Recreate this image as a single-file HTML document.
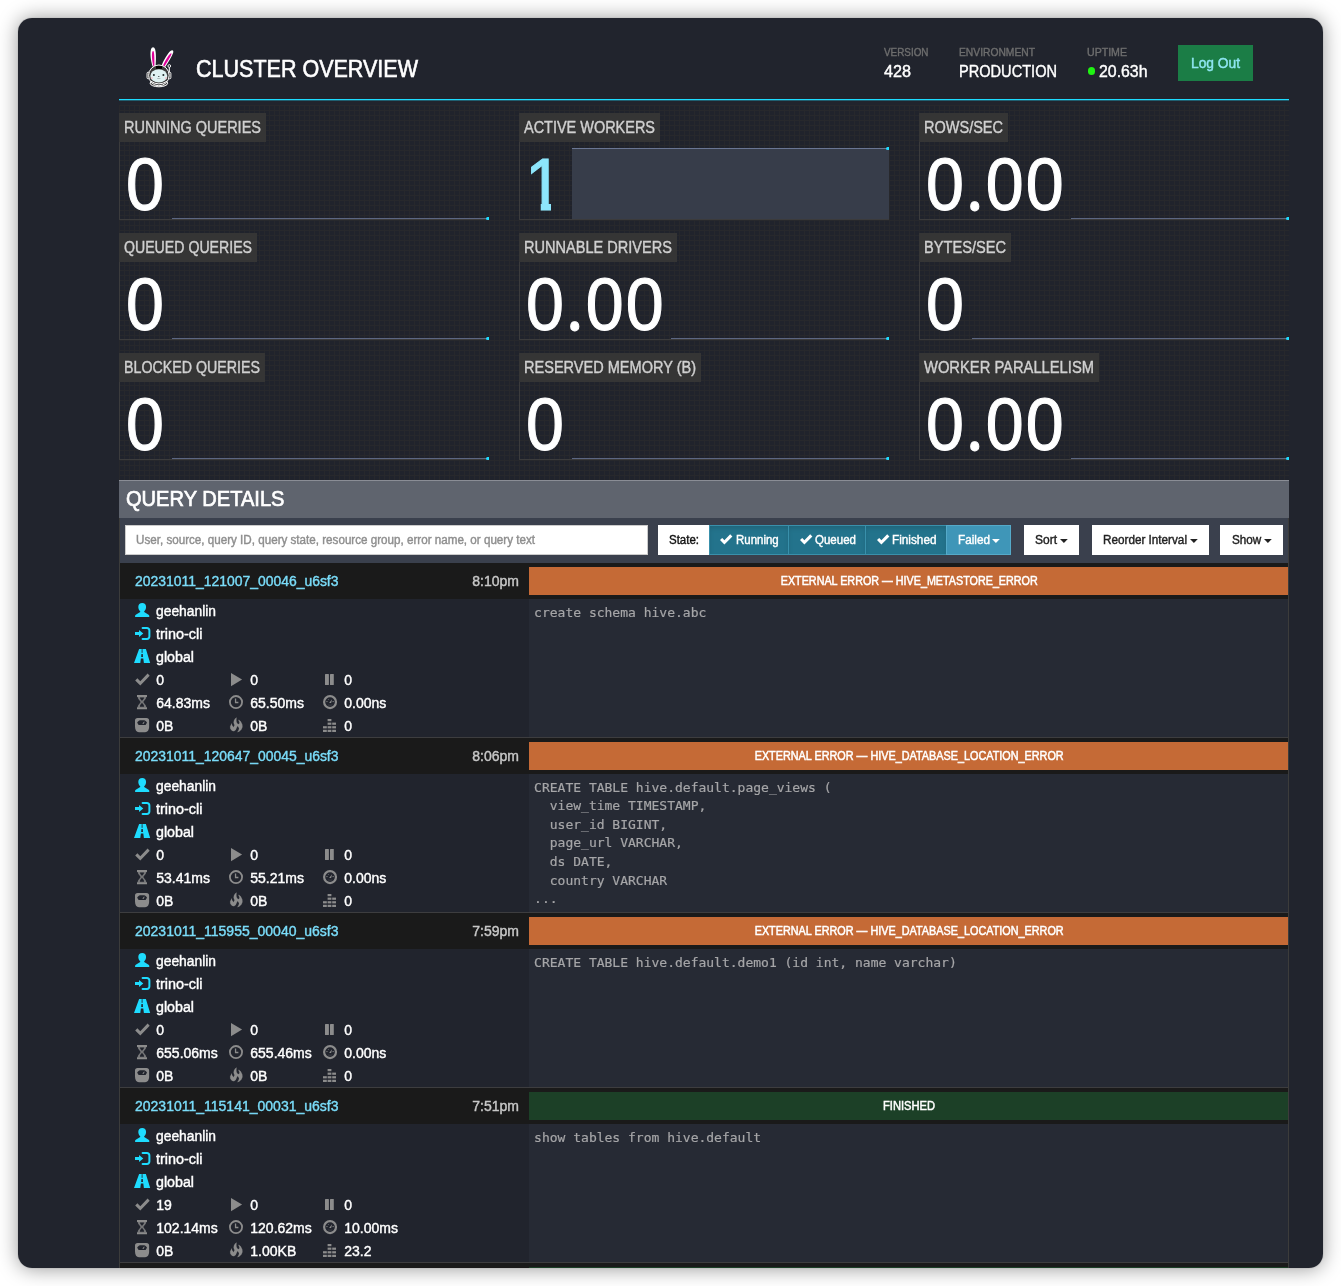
<!DOCTYPE html>
<html lang="en"><head><meta charset="utf-8"><title>Cluster Overview - Trino</title>
<style>
html,body{margin:0;padding:0;background:#fff;}
body{width:1341px;height:1286px;overflow:hidden;position:relative;font-family:"Liberation Sans",Arial,sans-serif;}
.win{position:absolute;left:18px;top:18px;width:1305px;height:1250px;border-radius:14px;background:#21242d;overflow:hidden;}
.shadow{position:absolute;left:18px;top:18px;width:1305px;height:1250px;border-radius:14px;box-shadow:0 .5px 20px rgba(0,0,0,.4),0 0 1px rgba(0,0,0,.4);}
.pg{position:absolute;left:-18px;top:-18px;width:1341px;height:1286px;will-change:transform;}
.t{position:absolute;white-space:pre;line-height:1;-webkit-text-stroke-width:.4px;}
.r{position:absolute;}
svg{position:absolute;overflow:visible;}
.dot{display:inline-block;width:21.4px;line-height:0;font-size:.9em;position:relative;left:-1.2px;top:-.6px;text-align:center;letter-spacing:0;font-family:'Noto Sans CJK SC','Noto Sans CJK JP','Liberation Sans',sans-serif;}
.grid{background-color:#20232c;background-image:linear-gradient(to right,#27282c 1px,transparent 1px),linear-gradient(to bottom,#27282c 1px,transparent 1px);background-size:5px 5px;}
</style></head><body>
<div class="shadow"></div>
<div class="win"><div class="pg">
<svg style="left:140px;top:44px" width="40" height="46" viewBox="0 0 40 46">
<g transform="translate(-140,-44)">
<path d="M152.6 66.6C150.6 60 149.9 53 151 49.3C151.8 46.6 154.3 46.6 155.1 49.3C156.2 53 156.1 60 155.6 66.2Z" fill="#fff"/>
<path d="M153.3 66C152 60.5 151.6 55 152.2 52.3C152.6 50.6 153.6 50.6 153.9 52.3C154.4 55 154.5 60.5 154.4 66Z" fill="#e1009a"/>
<path d="M161.6 65.6C164 59.5 167.6 53.6 170.4 51C172.4 49.2 174 50.4 173.1 52.9C171.8 56.6 168.4 62 165.2 67Z" fill="#fff"/>
<path d="M162.9 65.8C165 60.8 168 56 170.2 53.8C171.2 52.8 171.8 53.3 171.3 54.6C170.2 57.4 167.4 61.8 164.4 66.4Z" fill="#e1009a"/>
<path d="M169.3 72.5V67" stroke="#fff" stroke-width="1.1" fill="none"/>
<circle cx="169.3" cy="66" r="1.35" fill="#21242d" stroke="#fff" stroke-width=".9"/>
<rect x="147" y="72.2" width="2.6" height="6.6" rx="1.2" fill="#3a3a3a" stroke="#fff" stroke-width=".9"/>
<rect x="168.3" y="72.2" width="2.6" height="6.6" rx="1.2" fill="#3a3a3a" stroke="#fff" stroke-width=".9"/>
<ellipse cx="158.9" cy="83.2" rx="8.8" ry="3.6" fill="#4a4a4a" stroke="#fff" stroke-width="1"/>
<ellipse cx="158.9" cy="75.4" rx="10.3" ry="10.4" fill="#3c3c3c" stroke="#fff" stroke-width="1"/>
<ellipse cx="158.8" cy="75.9" rx="8.5" ry="6.6" fill="#dff2f2"/>
<path d="M150.8 81.2Q158.9 86.6 167 81.2" stroke="#fff" stroke-width="1" fill="none"/>
<rect x="156" y="65.9" width="6" height="2.9" fill="#000"/>
<circle cx="153.9" cy="75.1" r="1" fill="#1f2a2a"/>
<circle cx="163.4" cy="75.1" r="1" fill="#1f2a2a"/>
<path d="M157.9 76H159.7L158.8 77.1Z" fill="#111"/>
<path d="M157.2 78.5H160.4" stroke="#7d8a8a" stroke-width=".5"/>
<circle cx="151.8" cy="77.9" r="1" fill="#f4c9cf"/>
<circle cx="165.8" cy="77.9" r="1" fill="#f4c9cf"/>
</g></svg>
<span class="t" id="title" style="left:195.5px;top:58.03px;font-size:23px;color:#fff;transform:scaleX(0.9355);transform-origin:0 0;-webkit-text-stroke-width:.6px;">CLUSTER OVERVIEW</span>
<span class="t" id="h_ver_l" style="left:883.5px;top:46.89px;font-size:11px;color:#6e6e6e;transform:scaleX(0.8987);transform-origin:0 0;">VERSION</span>
<span class="t" id="h_ver" style="left:883.5px;top:64.16px;font-size:16px;color:#fff;transform:scaleX(1.0111);transform-origin:0 0;">428</span>
<span class="t" id="h_env_l" style="left:958.5px;top:46.89px;font-size:11px;color:#6e6e6e;transform:scaleX(0.9350);transform-origin:0 0;">ENVIRONMENT</span>
<span class="t" id="h_env" style="left:958.5px;top:64.16px;font-size:16px;color:#fff;transform:scaleX(0.9111);transform-origin:0 0;">PRODUCTION</span>
<span class="t" id="h_up_l" style="left:1086.9px;top:46.89px;font-size:11px;color:#6e6e6e;transform:scaleX(0.9624);transform-origin:0 0;">UPTIME</span>
<div class="r" style="left:1087.7px;top:67.4px;width:7.4px;height:7.4px;background:#1ff312;border-radius:50%;"></div>
<span class="t" id="h_up" style="left:1099.3px;top:64.16px;font-size:16px;color:#fff;transform:scaleX(0.9911);transform-origin:0 0;">20.63h</span>
<div class="r" style="left:1178px;top:45px;width:75px;height:35.5px;background:#1b7d46;"></div>
<span class="t" id="logout" style="left:1190.8px;top:56.15px;font-size:14px;color:#8fe6f2;transform:scaleX(0.9834);transform-origin:0 0;">Log Out</span>
<div class="r" style="left:119px;top:99px;width:1170px;height:1px;background:#1edcff;"></div>
<div class="r" style="left:119px;top:100px;width:1170px;height:1px;background:rgba(30,220,255,.32);"></div>
<div class="r grid" style="left:119px;top:105px;width:1170px;height:375px;"></div>
<div class="r" style="left:119px;top:113px;width:1px;height:107px;background:#3b3b3c;"></div>
<div class="r" style="left:119px;top:219px;width:370px;height:1px;background:#3b3b3c;"></div>
<div class="r" style="left:119px;top:113px;width:147px;height:28.5px;background:#353535;"></div>
<span class="t" id="s00t" style="left:124.3px;top:120.46px;font-size:16px;color:#d0d0d0;transform:scaleX(0.9065);transform-origin:0 0;">RUNNING QUERIES</span>
<span class="t" id="s00v" style="left:126.1px;top:148.44px;font-size:74.5px;color:#fff;-webkit-text-stroke-width:1.1px;transform:scaleX(.915);transform-origin:0 0;letter-spacing:2.4px;">0</span>
<div class="r" style="left:172px;top:218px;width:317px;height:1px;background:#5c6782;"></div>
<div class="r" style="left:486px;top:216.7px;width:3px;height:3.6px;background:#1edcff;border-radius:1.8px 0 0 1.8px;"></div>
<div class="r" style="left:119px;top:233px;width:1px;height:107px;background:#3b3b3c;"></div>
<div class="r" style="left:119px;top:339px;width:370px;height:1px;background:#3b3b3c;"></div>
<div class="r" style="left:119px;top:233px;width:138px;height:28.5px;background:#353535;"></div>
<span class="t" id="s01t" style="left:124.3px;top:240.46px;font-size:16px;color:#d0d0d0;transform:scaleX(0.8832);transform-origin:0 0;">QUEUED QUERIES</span>
<span class="t" id="s01v" style="left:126.1px;top:268.44px;font-size:74.5px;color:#fff;-webkit-text-stroke-width:1.1px;transform:scaleX(.915);transform-origin:0 0;letter-spacing:2.4px;">0</span>
<div class="r" style="left:172px;top:338px;width:317px;height:1px;background:#5c6782;"></div>
<div class="r" style="left:486px;top:336.7px;width:3px;height:3.6px;background:#1edcff;border-radius:1.8px 0 0 1.8px;"></div>
<div class="r" style="left:119px;top:353px;width:1px;height:107px;background:#3b3b3c;"></div>
<div class="r" style="left:119px;top:459px;width:370px;height:1px;background:#3b3b3c;"></div>
<div class="r" style="left:119px;top:353px;width:146px;height:28.5px;background:#353535;"></div>
<span class="t" id="s02t" style="left:124.3px;top:360.46px;font-size:16px;color:#d0d0d0;transform:scaleX(0.8893);transform-origin:0 0;">BLOCKED QUERIES</span>
<span class="t" id="s02v" style="left:126.1px;top:388.44px;font-size:74.5px;color:#fff;-webkit-text-stroke-width:1.1px;transform:scaleX(.915);transform-origin:0 0;letter-spacing:2.4px;">0</span>
<div class="r" style="left:172px;top:458px;width:317px;height:1px;background:#5c6782;"></div>
<div class="r" style="left:486px;top:456.7px;width:3px;height:3.6px;background:#1edcff;border-radius:1.8px 0 0 1.8px;"></div>
<div class="r" style="left:519px;top:113px;width:1px;height:107px;background:#3b3b3c;"></div>
<div class="r" style="left:519px;top:219px;width:370px;height:1px;background:#3b3b3c;"></div>
<div class="r" style="left:519px;top:113px;width:141px;height:28.5px;background:#353535;"></div>
<span class="t" id="s10t" style="left:524.3px;top:120.46px;font-size:16px;color:#d0d0d0;transform:scaleX(0.9040);transform-origin:0 0;">ACTIVE WORKERS</span>
<span class="t" id="s10v" style="left:524.8px;top:148.44px;font-size:74.5px;color:#8de6fc;-webkit-text-stroke-width:1.1px;transform:scaleX(.915);transform-origin:0 0;letter-spacing:2.4px;clip-path:polygon(0 -5px,100% -5px,100% 55px,28.4px 55px,28.4px 100%,17.2px 100%,17.2px 55px,0 55px);">1</span>
<div class="r" style="left:572px;top:149px;width:317px;height:70px;background:#373d4a;"></div>
<div class="r" style="left:572px;top:148px;width:317px;height:1px;background:#6a7693;"></div>
<div class="r" style="left:886px;top:146.7px;width:3px;height:3.6px;background:#1edcff;border-radius:1.8px 0 0 1.8px;"></div>
<div class="r" style="left:519px;top:233px;width:1px;height:107px;background:#3b3b3c;"></div>
<div class="r" style="left:519px;top:339px;width:370px;height:1px;background:#3b3b3c;"></div>
<div class="r" style="left:519px;top:233px;width:158px;height:28.5px;background:#353535;"></div>
<span class="t" id="s11t" style="left:524.3px;top:240.46px;font-size:16px;color:#d0d0d0;transform:scaleX(0.9096);transform-origin:0 0;">RUNNABLE DRIVERS</span>
<span class="t" id="s11v" style="left:526.1px;top:268.44px;font-size:74.5px;color:#fff;-webkit-text-stroke-width:1.1px;transform:scaleX(.915);transform-origin:0 0;letter-spacing:2.4px;">0<span class="dot">.</span>00</span>
<div class="r" style="left:671px;top:338px;width:218px;height:1px;background:#5c6782;"></div>
<div class="r" style="left:886px;top:336.7px;width:3px;height:3.6px;background:#1edcff;border-radius:1.8px 0 0 1.8px;"></div>
<div class="r" style="left:519px;top:353px;width:1px;height:107px;background:#3b3b3c;"></div>
<div class="r" style="left:519px;top:459px;width:370px;height:1px;background:#3b3b3c;"></div>
<div class="r" style="left:519px;top:353px;width:182px;height:28.5px;background:#353535;"></div>
<span class="t" id="s12t" style="left:524.3px;top:360.46px;font-size:16px;color:#d0d0d0;transform:scaleX(0.9083);transform-origin:0 0;">RESERVED MEMORY (B)</span>
<span class="t" id="s12v" style="left:526.1px;top:388.44px;font-size:74.5px;color:#fff;-webkit-text-stroke-width:1.1px;transform:scaleX(.915);transform-origin:0 0;letter-spacing:2.4px;">0</span>
<div class="r" style="left:572px;top:458px;width:317px;height:1px;background:#5c6782;"></div>
<div class="r" style="left:886px;top:456.7px;width:3px;height:3.6px;background:#1edcff;border-radius:1.8px 0 0 1.8px;"></div>
<div class="r" style="left:919px;top:113px;width:1px;height:107px;background:#3b3b3c;"></div>
<div class="r" style="left:919px;top:219px;width:370px;height:1px;background:#3b3b3c;"></div>
<div class="r" style="left:919px;top:113px;width:89px;height:28.5px;background:#353535;"></div>
<span class="t" id="s20t" style="left:924.3px;top:120.46px;font-size:16px;color:#d0d0d0;transform:scaleX(0.9067);transform-origin:0 0;">ROWS/SEC</span>
<span class="t" id="s20v" style="left:926.1px;top:148.44px;font-size:74.5px;color:#fff;-webkit-text-stroke-width:1.1px;transform:scaleX(.915);transform-origin:0 0;letter-spacing:2.4px;">0<span class="dot">.</span>00</span>
<div class="r" style="left:1071px;top:218px;width:218px;height:1px;background:#5c6782;"></div>
<div class="r" style="left:1286px;top:216.7px;width:3px;height:3.6px;background:#1edcff;border-radius:1.8px 0 0 1.8px;"></div>
<div class="r" style="left:919px;top:233px;width:1px;height:107px;background:#3b3b3c;"></div>
<div class="r" style="left:919px;top:339px;width:370px;height:1px;background:#3b3b3c;"></div>
<div class="r" style="left:919px;top:233px;width:92px;height:28.5px;background:#353535;"></div>
<span class="t" id="s21t" style="left:924.3px;top:240.46px;font-size:16px;color:#d0d0d0;transform:scaleX(0.9130);transform-origin:0 0;">BYTES/SEC</span>
<span class="t" id="s21v" style="left:926.1px;top:268.44px;font-size:74.5px;color:#fff;-webkit-text-stroke-width:1.1px;transform:scaleX(.915);transform-origin:0 0;letter-spacing:2.4px;">0</span>
<div class="r" style="left:972px;top:338px;width:317px;height:1px;background:#5c6782;"></div>
<div class="r" style="left:1286px;top:336.7px;width:3px;height:3.6px;background:#1edcff;border-radius:1.8px 0 0 1.8px;"></div>
<div class="r" style="left:919px;top:353px;width:1px;height:107px;background:#3b3b3c;"></div>
<div class="r" style="left:919px;top:459px;width:370px;height:1px;background:#3b3b3c;"></div>
<div class="r" style="left:919px;top:353px;width:180px;height:28.5px;background:#353535;"></div>
<span class="t" id="s22t" style="left:924.3px;top:360.46px;font-size:16px;color:#d0d0d0;transform:scaleX(0.9207);transform-origin:0 0;">WORKER PARALLELISM</span>
<span class="t" id="s22v" style="left:926.1px;top:388.44px;font-size:74.5px;color:#fff;-webkit-text-stroke-width:1.1px;transform:scaleX(.915);transform-origin:0 0;letter-spacing:2.4px;">0<span class="dot">.</span>00</span>
<div class="r" style="left:1071px;top:458px;width:218px;height:1px;background:#5c6782;"></div>
<div class="r" style="left:1286px;top:456.7px;width:3px;height:3.6px;background:#1edcff;border-radius:1.8px 0 0 1.8px;"></div>
<div class="r" style="left:119px;top:480px;width:1170px;height:38px;background:#5f646e;"></div>
<div class="r" style="left:119px;top:480px;width:1170px;height:1px;background:#8a8d95;"></div>
<span class="t" id="qd" style="left:125.6px;top:488.12px;font-size:22.3px;color:#fff;transform:scaleX(0.9007);transform-origin:0 0;-webkit-text-stroke-width:.7px;">QUERY DETAILS</span>
<div class="r" style="left:119px;top:518px;width:1170px;height:45px;background:#3a404d;"></div>
<div class="r" style="left:125px;top:525px;width:523px;height:30px;background:#fff;box-shadow:inset 0 0 0 1px #ccc;"></div>
<span class="t" id="ph" style="left:135.6px;top:534.04px;font-size:12px;color:#8e8e8e;transform:scaleX(0.9696);transform-origin:0 0;">User, source, query ID, query state, resource group, error name, or query text</span>
<div class="r" style="left:658px;top:525px;width:51px;height:30px;background:#fff;"></div>
<span class="t" id="st_l" style="left:668.5px;top:534.04px;font-size:12px;color:#111;transform:scaleX(0.9567);transform-origin:0 0;">State:</span>
<div class="r" style="left:709px;top:525px;width:80px;height:30px;background:#23738c;box-shadow:inset 0 0 0 1px #3990ab,inset 0 3px 5px rgba(0,0,0,.14);"></div>
<span class="t" id="b_run" style="left:735.5px;top:533.94px;font-size:12px;color:#fff;transform:scaleX(0.9552);transform-origin:0 0;">Running</span>
<div class="r" style="left:788px;top:525px;width:78px;height:30px;background:#23738c;box-shadow:inset 0 0 0 1px #3990ab,inset 0 3px 5px rgba(0,0,0,.14);"></div>
<span class="t" id="b_que" style="left:814.8px;top:533.94px;font-size:12px;color:#fff;transform:scaleX(0.9601);transform-origin:0 0;">Queued</span>
<div class="r" style="left:865px;top:525px;width:82px;height:30px;background:#23738c;box-shadow:inset 0 0 0 1px #3990ab,inset 0 3px 5px rgba(0,0,0,.14);"></div>
<span class="t" id="b_fin" style="left:891.8px;top:533.94px;font-size:12px;color:#fff;transform:scaleX(0.9811);transform-origin:0 0;">Finished</span>
<div class="r" style="left:946px;top:525px;width:65px;height:30px;background:#3f96b8;box-shadow:inset 0 0 0 1px #55aac9;"></div>
<span class="t" id="b_fail" style="left:957.5px;top:533.94px;font-size:12px;color:#fff;transform:scaleX(0.9790);transform-origin:0 0;">Failed</span>
<div class="r" style="left:1024px;top:525px;width:55px;height:30px;background:#fff;"></div>
<span class="t" id="b_sort" style="left:1035.2px;top:533.94px;font-size:12px;color:#222;transform:scaleX(0.9993);transform-origin:0 0;">Sort</span>
<div class="r" style="left:1092px;top:525px;width:117px;height:30px;background:#fff;"></div>
<span class="t" id="b_reo" style="left:1103px;top:533.94px;font-size:12px;color:#222;transform:scaleX(0.9762);transform-origin:0 0;">Reorder Interval</span>
<div class="r" style="left:1220px;top:525px;width:63px;height:30px;background:#fff;"></div>
<span class="t" id="b_show" style="left:1231.6px;top:533.94px;font-size:12px;color:#222;transform:scaleX(0.9757);transform-origin:0 0;">Show</span>
<svg style="left:720.2px;top:534.2px" width="12.4" height="10.6" viewBox="0 0 12.4 10.6"><path fill="#fff" d="M0 6.1L2.2 3.9L4.4 6.2L10.2 .2L12.4 2.4L4.4 10.6Z"/></svg>
<svg style="left:799.7px;top:534.2px" width="12.4" height="10.6" viewBox="0 0 12.4 10.6"><path fill="#fff" d="M0 6.1L2.2 3.9L4.4 6.2L10.2 .2L12.4 2.4L4.4 10.6Z"/></svg>
<svg style="left:876.7px;top:534.2px" width="12.4" height="10.6" viewBox="0 0 12.4 10.6"><path fill="#fff" d="M0 6.1L2.2 3.9L4.4 6.2L10.2 .2L12.4 2.4L4.4 10.6Z"/></svg>
<svg style="left:992.2px;top:538.6px" width="7.8" height="4" viewBox="0 0 7.8 4"><path fill="#fff" d="M0 0H7.8L3.9 4Z"/></svg>
<svg style="left:1060.2px;top:538.6px" width="7.8" height="4" viewBox="0 0 7.8 4"><path fill="#222" d="M0 0H7.8L3.9 4Z"/></svg>
<svg style="left:1189.9px;top:538.6px" width="7.8" height="4" viewBox="0 0 7.8 4"><path fill="#222" d="M0 0H7.8L3.9 4Z"/></svg>
<svg style="left:1263.8px;top:538.6px" width="7.8" height="4" viewBox="0 0 7.8 4"><path fill="#222" d="M0 0H7.8L3.9 4Z"/></svg>
<div class="r" style="left:119px;top:563px;width:1169px;height:35.5px;background:#1a1a1a;"></div>
<div class="r" style="left:529px;top:598.5px;width:759px;height:138.5px;background:#262a34;"></div>
<div class="r" style="left:119px;top:737px;width:1169px;height:1px;background:#3d3d3f;"></div>
<span class="t" id="q0id" style="left:135px;top:574.35px;font-size:14px;color:#7adcf9;transform:scaleX(0.9950);transform-origin:0 0;">20231011_121007_00046_u6sf3</span>
<span class="t" id="q0tm" style="right:822px;top:574.35px;font-size:14px;color:#c8c8c8;">8:10pm</span>
<div class="r" style="left:529px;top:567px;width:759px;height:27.5px;background:#c56a36;"></div>
<div class="t" style="left:609.3px;width:600px;text-align:center;top:574.84px;font-size:12px;color:#fff;-webkit-text-stroke-width:.5px;"><span id="q0st" style="display:inline-block;transform:scaleX(0.8970);transform-origin:50% 0;">EXTERNAL ERROR — HIVE_METASTORE_ERROR</span></div>
<span class="t" id="q0u" style="left:156px;top:604.05px;font-size:14px;color:#fff;transform:scaleX(0.9879);transform-origin:0 0;">geehanlin</span>
<span class="t" id="q0s" style="left:156px;top:626.85px;font-size:14px;color:#fff;transform:scaleX(1.0305);transform-origin:0 0;">trino-cli</span>
<span class="t" id="q0g" style="left:156px;top:649.65px;font-size:14px;color:#fff;transform:scaleX(1.0167);transform-origin:0 0;">global</span>
<svg style="left:134.8px;top:603px" width="14.4" height="14" viewBox="0 0 14.4 14"><path fill="#1edcff" d="M7.2 0C9.6 0 11.1 1.6 11.1 4C11.1 5.8 10.3 7.3 9.2 8.2V8.9L13.6 11.7C14.1 12 14.3 12.4 14.3 13V14H.1V13C.1 12.4 .3 12 .8 11.7L5.2 8.9V8.2C4.1 7.3 3.3 5.8 3.3 4C3.3 1.6 4.8 0 7.2 0Z"/></svg><svg style="left:134.8px;top:627.1px" width="15.4" height="13" viewBox="0 0 15.4 13"><path fill="#1edcff" d="M0 4.9H4V2.9L8.3 6.4L4 9.9V7.9H0Z"/><path fill="none" stroke="#1edcff" stroke-width="2" stroke-linecap="round" d="M7.6 1H12a2.4 2.4 0 0 1 2.4 2.4V9.6a2.4 2.4 0 0 1-2.4 2.4H7.6"/></svg><svg style="left:133.9px;top:648.9px" width="16.2" height="14.1" viewBox="0 0 16.2 14.1"><path fill="#1edcff" fill-rule="evenodd" d="M5.1 0H11.9L16.2 14.1H0ZM7.75 0L7.6 3.8H8.6L8.45 0ZM7.4 5.1L7.2 7.9H9L8.8 5.1ZM6.9 9.5L6.3 14.1H9.9L9.3 9.5Z"/></svg><svg style="left:135px;top:673px" width="15" height="13" viewBox="0 0 15 13"><path fill="#8c8c8c" d="M.2 7.4L2.4 5.2L5.3 8.2L12.6 .5L14.7 2.7L5.3 12.5Z"/></svg><svg style="left:230.8px;top:673px" width="11.2" height="13.2" viewBox="0 0 11.2 13.2"><path fill="#8c8c8c" d="M0 0L11.1 6.4L0 13.2Z"/></svg><svg style="left:325px;top:674px" width="9" height="11" viewBox="0 0 9 11"><rect x="0" y="0" width="3.9" height="11" rx=".5" fill="#8c8c8c"/><rect x="5" y="0" width="3.8" height="11" rx=".5" fill="#8c8c8c"/></svg><svg style="left:137px;top:694.9px" width="10.2" height="14.2" viewBox="0 0 10.2 14.2"><path fill="#8c8c8c" d="M0 .1H10V1.9H0ZM0 12.3H10V14.15H0Z"/><path fill="#8c8c8c" opacity=".8" fill-rule="evenodd" d="M.7 1.8H9.3C9.3 4.6 6.5 5.7 6.5 7.1C6.5 8.5 9.3 9.7 9.3 12.4H.7C.7 9.7 3.5 8.5 3.5 7.1C3.5 5.7 .7 4.6 .7 1.8ZM3 2.5C3 4.5 4.5 5 5 5.9C5.5 5 7 4.5 7 2.5ZM5 7.8C4.5 8.8 2.9 9.3 2.9 11.8H7.1C7.1 9.3 5.5 8.8 5 7.8Z"/></svg><svg style="left:229px;top:694.9px" width="14" height="14.2" viewBox="0 0 14 14.2"><circle cx="7" cy="7.1" r="6.1" fill="none" stroke="#8c8c8c" stroke-width="1.8"/><path fill="#8c8c8c" d="M5.9 3.6H7.2V6.8H9.4V8.2H5.9Z"/></svg><svg style="left:322.9px;top:694.9px" width="14.1" height="14.2" viewBox="0 0 14.1 14.2"><circle cx="7.05" cy="7.1" r="5.95" fill="none" stroke="#8c8c8c" stroke-width="2.2"/><path fill="#8c8c8c" d="M6.1 7.9L8.1 8L9.1 4.3Z"/><path fill="none" stroke="#8c8c8c" stroke-width="1" opacity=".75" d="M3.2 6.6H4.7M9.4 6.6H11M4.9 4L5.6 4.7"/><path fill="none" stroke="#8c8c8c" stroke-width=".8" opacity=".3" d="M4.8 9.9Q7.05 10.8 9.3 9.9"/></svg><svg style="left:134.9px;top:717.85px" width="14.2" height="14.2" viewBox="0 0 14.2 14.2"><path fill="#8c8c8c" fill-rule="evenodd" d="M2.6 0H11.5C13.2 0 14.15 .9 14.15 2.6V8.5C14.15 12 12.6 14.15 10.2 14.15H3.9C1.5 14.15 0 12 0 8.5V2.6C0 .9 .9 0 2.6 0ZM4.9 2.3C4.5 2.3 4.2 2.5 3.9 2.8L2.5 4.1C2.2 4.4 2.2 4.7 2.4 5L3.3 6.6C3.5 7 3.8 7.1 4.2 7.1H10C10.4 7.1 10.7 7 10.9 6.6L11.8 5C12 4.7 12 4.4 11.7 4.1L10.3 2.8C10 2.5 9.7 2.3 9.3 2.3ZM7.3 5.8L9.1 3.5L9.6 3.9L8.5 6Z"/></svg><svg style="left:229.7px;top:717.8px" width="12.8" height="14.4" viewBox="0 0 12.8 14.4"><path fill="#8c8c8c" stroke="#8c8c8c" stroke-width=".15" stroke-linejoin="round" d="M6.57 -0.46L6.36 1.85L6.53 3.9L7.34 5.52L8.62 6.21L9.56 5.1L9.1 3.56L8.48 2.36L8.82 1.64L10.84 3.56L12.3 6.47L12.47 9.03L11.44 11.6L9.3 13.39L7.34 14.16L8.36 12.62L9.1 10.74L8.53 9.2L7.59 8.0L6.57 9.89L5.71 11.94L4.0 13.22L1.95 12.71L0.32 10.74L0.15 8.52L1.35 5.95L1.6 5.27L2.15 7.32L3.57 9.29L4.51 7.32L3.62 4.75L3.91 2.7L4.94 0.82Z"/></svg><svg style="left:322.9px;top:719.1px" width="13.4" height="13.2" viewBox="0 0 13.4 13.2"><rect x="0.0" y="7.2" width="3.8" height="2.2" fill="#8c8c8c"/><rect x="0.0" y="10.8" width="3.8" height="2.2" fill="#8c8c8c"/><rect x="4.6" y="0.0" width="3.8" height="2.2" fill="#8c8c8c"/><rect x="4.6" y="3.6" width="3.8" height="2.2" fill="#8c8c8c"/><rect x="4.6" y="7.2" width="3.8" height="2.2" fill="#8c8c8c"/><rect x="4.6" y="10.8" width="3.8" height="2.2" fill="#8c8c8c"/><rect x="9.2" y="3.6" width="3.8" height="2.2" fill="#8c8c8c"/><rect x="9.2" y="7.2" width="3.8" height="2.2" fill="#8c8c8c"/><rect x="9.2" y="10.8" width="3.8" height="2.2" fill="#8c8c8c"/></svg>
<span class="t" id="q0v0" style="left:156.3px;top:672.75px;font-size:14px;color:#fff;">0</span>
<span class="t" id="q0v1" style="left:250.3px;top:672.75px;font-size:14px;color:#fff;">0</span>
<span class="t" id="q0v2" style="left:344.3px;top:672.75px;font-size:14px;color:#fff;">0</span>
<span class="t" id="q0v3" style="left:156.3px;top:695.75px;font-size:14px;color:#fff;">64.83ms</span>
<span class="t" id="q0v4" style="left:250.3px;top:695.75px;font-size:14px;color:#fff;">65.50ms</span>
<span class="t" id="q0v5" style="left:344.3px;top:695.75px;font-size:14px;color:#fff;">0.00ns</span>
<span class="t" id="q0v6" style="left:156.3px;top:718.75px;font-size:14px;color:#fff;">0B</span>
<span class="t" id="q0v7" style="left:250.3px;top:718.75px;font-size:14px;color:#fff;">0B</span>
<span class="t" id="q0v8" style="left:344.3px;top:718.75px;font-size:14px;color:#fff;">0</span>
<span class="t" id="q0c0" style="left:534.1px;top:605.58px;font-size:13px;color:#a6a6a8;font-family:'DejaVu Sans Mono','Liberation Mono',monospace;-webkit-text-stroke-width:.2px;">create schema hive.abc</span>
<div class="r" style="left:119px;top:738px;width:1169px;height:35.5px;background:#1a1a1a;"></div>
<div class="r" style="left:529px;top:773.5px;width:759px;height:138.5px;background:#262a34;"></div>
<div class="r" style="left:119px;top:912px;width:1169px;height:1px;background:#3d3d3f;"></div>
<span class="t" id="q1id" style="left:135px;top:749.35px;font-size:14px;color:#7adcf9;transform:scaleX(0.9950);transform-origin:0 0;">20231011_120647_00045_u6sf3</span>
<span class="t" id="q1tm" style="right:822px;top:749.35px;font-size:14px;color:#c8c8c8;">8:06pm</span>
<div class="r" style="left:529px;top:742px;width:759px;height:27.5px;background:#c56a36;"></div>
<div class="t" style="left:609.3px;width:600px;text-align:center;top:749.84px;font-size:12px;color:#fff;-webkit-text-stroke-width:.5px;"><span id="q1st" style="display:inline-block;transform:scaleX(0.9027);transform-origin:50% 0;">EXTERNAL ERROR — HIVE_DATABASE_LOCATION_ERROR</span></div>
<span class="t" id="q1u" style="left:156px;top:779.05px;font-size:14px;color:#fff;transform:scaleX(0.9879);transform-origin:0 0;">geehanlin</span>
<span class="t" id="q1s" style="left:156px;top:801.85px;font-size:14px;color:#fff;transform:scaleX(1.0305);transform-origin:0 0;">trino-cli</span>
<span class="t" id="q1g" style="left:156px;top:824.65px;font-size:14px;color:#fff;transform:scaleX(1.0167);transform-origin:0 0;">global</span>
<svg style="left:134.8px;top:778px" width="14.4" height="14" viewBox="0 0 14.4 14"><path fill="#1edcff" d="M7.2 0C9.6 0 11.1 1.6 11.1 4C11.1 5.8 10.3 7.3 9.2 8.2V8.9L13.6 11.7C14.1 12 14.3 12.4 14.3 13V14H.1V13C.1 12.4 .3 12 .8 11.7L5.2 8.9V8.2C4.1 7.3 3.3 5.8 3.3 4C3.3 1.6 4.8 0 7.2 0Z"/></svg><svg style="left:134.8px;top:802.1px" width="15.4" height="13" viewBox="0 0 15.4 13"><path fill="#1edcff" d="M0 4.9H4V2.9L8.3 6.4L4 9.9V7.9H0Z"/><path fill="none" stroke="#1edcff" stroke-width="2" stroke-linecap="round" d="M7.6 1H12a2.4 2.4 0 0 1 2.4 2.4V9.6a2.4 2.4 0 0 1-2.4 2.4H7.6"/></svg><svg style="left:133.9px;top:823.9px" width="16.2" height="14.1" viewBox="0 0 16.2 14.1"><path fill="#1edcff" fill-rule="evenodd" d="M5.1 0H11.9L16.2 14.1H0ZM7.75 0L7.6 3.8H8.6L8.45 0ZM7.4 5.1L7.2 7.9H9L8.8 5.1ZM6.9 9.5L6.3 14.1H9.9L9.3 9.5Z"/></svg><svg style="left:135px;top:848px" width="15" height="13" viewBox="0 0 15 13"><path fill="#8c8c8c" d="M.2 7.4L2.4 5.2L5.3 8.2L12.6 .5L14.7 2.7L5.3 12.5Z"/></svg><svg style="left:230.8px;top:848px" width="11.2" height="13.2" viewBox="0 0 11.2 13.2"><path fill="#8c8c8c" d="M0 0L11.1 6.4L0 13.2Z"/></svg><svg style="left:325px;top:849px" width="9" height="11" viewBox="0 0 9 11"><rect x="0" y="0" width="3.9" height="11" rx=".5" fill="#8c8c8c"/><rect x="5" y="0" width="3.8" height="11" rx=".5" fill="#8c8c8c"/></svg><svg style="left:137px;top:869.9px" width="10.2" height="14.2" viewBox="0 0 10.2 14.2"><path fill="#8c8c8c" d="M0 .1H10V1.9H0ZM0 12.3H10V14.15H0Z"/><path fill="#8c8c8c" opacity=".8" fill-rule="evenodd" d="M.7 1.8H9.3C9.3 4.6 6.5 5.7 6.5 7.1C6.5 8.5 9.3 9.7 9.3 12.4H.7C.7 9.7 3.5 8.5 3.5 7.1C3.5 5.7 .7 4.6 .7 1.8ZM3 2.5C3 4.5 4.5 5 5 5.9C5.5 5 7 4.5 7 2.5ZM5 7.8C4.5 8.8 2.9 9.3 2.9 11.8H7.1C7.1 9.3 5.5 8.8 5 7.8Z"/></svg><svg style="left:229px;top:869.9px" width="14" height="14.2" viewBox="0 0 14 14.2"><circle cx="7" cy="7.1" r="6.1" fill="none" stroke="#8c8c8c" stroke-width="1.8"/><path fill="#8c8c8c" d="M5.9 3.6H7.2V6.8H9.4V8.2H5.9Z"/></svg><svg style="left:322.9px;top:869.9px" width="14.1" height="14.2" viewBox="0 0 14.1 14.2"><circle cx="7.05" cy="7.1" r="5.95" fill="none" stroke="#8c8c8c" stroke-width="2.2"/><path fill="#8c8c8c" d="M6.1 7.9L8.1 8L9.1 4.3Z"/><path fill="none" stroke="#8c8c8c" stroke-width="1" opacity=".75" d="M3.2 6.6H4.7M9.4 6.6H11M4.9 4L5.6 4.7"/><path fill="none" stroke="#8c8c8c" stroke-width=".8" opacity=".3" d="M4.8 9.9Q7.05 10.8 9.3 9.9"/></svg><svg style="left:134.9px;top:892.85px" width="14.2" height="14.2" viewBox="0 0 14.2 14.2"><path fill="#8c8c8c" fill-rule="evenodd" d="M2.6 0H11.5C13.2 0 14.15 .9 14.15 2.6V8.5C14.15 12 12.6 14.15 10.2 14.15H3.9C1.5 14.15 0 12 0 8.5V2.6C0 .9 .9 0 2.6 0ZM4.9 2.3C4.5 2.3 4.2 2.5 3.9 2.8L2.5 4.1C2.2 4.4 2.2 4.7 2.4 5L3.3 6.6C3.5 7 3.8 7.1 4.2 7.1H10C10.4 7.1 10.7 7 10.9 6.6L11.8 5C12 4.7 12 4.4 11.7 4.1L10.3 2.8C10 2.5 9.7 2.3 9.3 2.3ZM7.3 5.8L9.1 3.5L9.6 3.9L8.5 6Z"/></svg><svg style="left:229.7px;top:892.8px" width="12.8" height="14.4" viewBox="0 0 12.8 14.4"><path fill="#8c8c8c" stroke="#8c8c8c" stroke-width=".15" stroke-linejoin="round" d="M6.57 -0.46L6.36 1.85L6.53 3.9L7.34 5.52L8.62 6.21L9.56 5.1L9.1 3.56L8.48 2.36L8.82 1.64L10.84 3.56L12.3 6.47L12.47 9.03L11.44 11.6L9.3 13.39L7.34 14.16L8.36 12.62L9.1 10.74L8.53 9.2L7.59 8.0L6.57 9.89L5.71 11.94L4.0 13.22L1.95 12.71L0.32 10.74L0.15 8.52L1.35 5.95L1.6 5.27L2.15 7.32L3.57 9.29L4.51 7.32L3.62 4.75L3.91 2.7L4.94 0.82Z"/></svg><svg style="left:322.9px;top:894.1px" width="13.4" height="13.2" viewBox="0 0 13.4 13.2"><rect x="0.0" y="7.2" width="3.8" height="2.2" fill="#8c8c8c"/><rect x="0.0" y="10.8" width="3.8" height="2.2" fill="#8c8c8c"/><rect x="4.6" y="0.0" width="3.8" height="2.2" fill="#8c8c8c"/><rect x="4.6" y="3.6" width="3.8" height="2.2" fill="#8c8c8c"/><rect x="4.6" y="7.2" width="3.8" height="2.2" fill="#8c8c8c"/><rect x="4.6" y="10.8" width="3.8" height="2.2" fill="#8c8c8c"/><rect x="9.2" y="3.6" width="3.8" height="2.2" fill="#8c8c8c"/><rect x="9.2" y="7.2" width="3.8" height="2.2" fill="#8c8c8c"/><rect x="9.2" y="10.8" width="3.8" height="2.2" fill="#8c8c8c"/></svg>
<span class="t" id="q1v0" style="left:156.3px;top:847.75px;font-size:14px;color:#fff;">0</span>
<span class="t" id="q1v1" style="left:250.3px;top:847.75px;font-size:14px;color:#fff;">0</span>
<span class="t" id="q1v2" style="left:344.3px;top:847.75px;font-size:14px;color:#fff;">0</span>
<span class="t" id="q1v3" style="left:156.3px;top:870.75px;font-size:14px;color:#fff;">53.41ms</span>
<span class="t" id="q1v4" style="left:250.3px;top:870.75px;font-size:14px;color:#fff;">55.21ms</span>
<span class="t" id="q1v5" style="left:344.3px;top:870.75px;font-size:14px;color:#fff;">0.00ns</span>
<span class="t" id="q1v6" style="left:156.3px;top:893.75px;font-size:14px;color:#fff;">0B</span>
<span class="t" id="q1v7" style="left:250.3px;top:893.75px;font-size:14px;color:#fff;">0B</span>
<span class="t" id="q1v8" style="left:344.3px;top:893.75px;font-size:14px;color:#fff;">0</span>
<span class="t" id="q1c0" style="left:534.1px;top:780.58px;font-size:13px;color:#a6a6a8;font-family:'DejaVu Sans Mono','Liberation Mono',monospace;-webkit-text-stroke-width:.2px;">CREATE TABLE hive.default.page_views (</span>
<span class="t" id="q1c1" style="left:534.1px;top:799.18px;font-size:13px;color:#a6a6a8;font-family:'DejaVu Sans Mono','Liberation Mono',monospace;-webkit-text-stroke-width:.2px;">  view_time TIMESTAMP,</span>
<span class="t" id="q1c2" style="left:534.1px;top:817.78px;font-size:13px;color:#a6a6a8;font-family:'DejaVu Sans Mono','Liberation Mono',monospace;-webkit-text-stroke-width:.2px;">  user_id BIGINT,</span>
<span class="t" id="q1c3" style="left:534.1px;top:836.38px;font-size:13px;color:#a6a6a8;font-family:'DejaVu Sans Mono','Liberation Mono',monospace;-webkit-text-stroke-width:.2px;">  page_url VARCHAR,</span>
<span class="t" id="q1c4" style="left:534.1px;top:854.98px;font-size:13px;color:#a6a6a8;font-family:'DejaVu Sans Mono','Liberation Mono',monospace;-webkit-text-stroke-width:.2px;">  ds DATE,</span>
<span class="t" id="q1c5" style="left:534.1px;top:873.58px;font-size:13px;color:#a6a6a8;font-family:'DejaVu Sans Mono','Liberation Mono',monospace;-webkit-text-stroke-width:.2px;">  country VARCHAR</span>
<span class="t" id="q1c6" style="left:534.1px;top:892.18px;font-size:13px;color:#a6a6a8;font-family:'DejaVu Sans Mono','Liberation Mono',monospace;-webkit-text-stroke-width:.2px;">...</span>
<div class="r" style="left:119px;top:913px;width:1169px;height:35.5px;background:#1a1a1a;"></div>
<div class="r" style="left:529px;top:948.5px;width:759px;height:138.5px;background:#262a34;"></div>
<div class="r" style="left:119px;top:1087px;width:1169px;height:1px;background:#3d3d3f;"></div>
<span class="t" id="q2id" style="left:135px;top:924.35px;font-size:14px;color:#7adcf9;transform:scaleX(1.0002);transform-origin:0 0;">20231011_115955_00040_u6sf3</span>
<span class="t" id="q2tm" style="right:822px;top:924.35px;font-size:14px;color:#c8c8c8;">7:59pm</span>
<div class="r" style="left:529px;top:917px;width:759px;height:27.5px;background:#c56a36;"></div>
<div class="t" style="left:609.3px;width:600px;text-align:center;top:924.84px;font-size:12px;color:#fff;-webkit-text-stroke-width:.5px;"><span id="q2st" style="display:inline-block;transform:scaleX(0.9027);transform-origin:50% 0;">EXTERNAL ERROR — HIVE_DATABASE_LOCATION_ERROR</span></div>
<span class="t" id="q2u" style="left:156px;top:954.05px;font-size:14px;color:#fff;transform:scaleX(0.9879);transform-origin:0 0;">geehanlin</span>
<span class="t" id="q2s" style="left:156px;top:976.85px;font-size:14px;color:#fff;transform:scaleX(1.0305);transform-origin:0 0;">trino-cli</span>
<span class="t" id="q2g" style="left:156px;top:999.65px;font-size:14px;color:#fff;transform:scaleX(1.0167);transform-origin:0 0;">global</span>
<svg style="left:134.8px;top:953px" width="14.4" height="14" viewBox="0 0 14.4 14"><path fill="#1edcff" d="M7.2 0C9.6 0 11.1 1.6 11.1 4C11.1 5.8 10.3 7.3 9.2 8.2V8.9L13.6 11.7C14.1 12 14.3 12.4 14.3 13V14H.1V13C.1 12.4 .3 12 .8 11.7L5.2 8.9V8.2C4.1 7.3 3.3 5.8 3.3 4C3.3 1.6 4.8 0 7.2 0Z"/></svg><svg style="left:134.8px;top:977.1px" width="15.4" height="13" viewBox="0 0 15.4 13"><path fill="#1edcff" d="M0 4.9H4V2.9L8.3 6.4L4 9.9V7.9H0Z"/><path fill="none" stroke="#1edcff" stroke-width="2" stroke-linecap="round" d="M7.6 1H12a2.4 2.4 0 0 1 2.4 2.4V9.6a2.4 2.4 0 0 1-2.4 2.4H7.6"/></svg><svg style="left:133.9px;top:998.9px" width="16.2" height="14.1" viewBox="0 0 16.2 14.1"><path fill="#1edcff" fill-rule="evenodd" d="M5.1 0H11.9L16.2 14.1H0ZM7.75 0L7.6 3.8H8.6L8.45 0ZM7.4 5.1L7.2 7.9H9L8.8 5.1ZM6.9 9.5L6.3 14.1H9.9L9.3 9.5Z"/></svg><svg style="left:135px;top:1023px" width="15" height="13" viewBox="0 0 15 13"><path fill="#8c8c8c" d="M.2 7.4L2.4 5.2L5.3 8.2L12.6 .5L14.7 2.7L5.3 12.5Z"/></svg><svg style="left:230.8px;top:1023px" width="11.2" height="13.2" viewBox="0 0 11.2 13.2"><path fill="#8c8c8c" d="M0 0L11.1 6.4L0 13.2Z"/></svg><svg style="left:325px;top:1024px" width="9" height="11" viewBox="0 0 9 11"><rect x="0" y="0" width="3.9" height="11" rx=".5" fill="#8c8c8c"/><rect x="5" y="0" width="3.8" height="11" rx=".5" fill="#8c8c8c"/></svg><svg style="left:137px;top:1044.9px" width="10.2" height="14.2" viewBox="0 0 10.2 14.2"><path fill="#8c8c8c" d="M0 .1H10V1.9H0ZM0 12.3H10V14.15H0Z"/><path fill="#8c8c8c" opacity=".8" fill-rule="evenodd" d="M.7 1.8H9.3C9.3 4.6 6.5 5.7 6.5 7.1C6.5 8.5 9.3 9.7 9.3 12.4H.7C.7 9.7 3.5 8.5 3.5 7.1C3.5 5.7 .7 4.6 .7 1.8ZM3 2.5C3 4.5 4.5 5 5 5.9C5.5 5 7 4.5 7 2.5ZM5 7.8C4.5 8.8 2.9 9.3 2.9 11.8H7.1C7.1 9.3 5.5 8.8 5 7.8Z"/></svg><svg style="left:229px;top:1044.9px" width="14" height="14.2" viewBox="0 0 14 14.2"><circle cx="7" cy="7.1" r="6.1" fill="none" stroke="#8c8c8c" stroke-width="1.8"/><path fill="#8c8c8c" d="M5.9 3.6H7.2V6.8H9.4V8.2H5.9Z"/></svg><svg style="left:322.9px;top:1044.9px" width="14.1" height="14.2" viewBox="0 0 14.1 14.2"><circle cx="7.05" cy="7.1" r="5.95" fill="none" stroke="#8c8c8c" stroke-width="2.2"/><path fill="#8c8c8c" d="M6.1 7.9L8.1 8L9.1 4.3Z"/><path fill="none" stroke="#8c8c8c" stroke-width="1" opacity=".75" d="M3.2 6.6H4.7M9.4 6.6H11M4.9 4L5.6 4.7"/><path fill="none" stroke="#8c8c8c" stroke-width=".8" opacity=".3" d="M4.8 9.9Q7.05 10.8 9.3 9.9"/></svg><svg style="left:134.9px;top:1067.85px" width="14.2" height="14.2" viewBox="0 0 14.2 14.2"><path fill="#8c8c8c" fill-rule="evenodd" d="M2.6 0H11.5C13.2 0 14.15 .9 14.15 2.6V8.5C14.15 12 12.6 14.15 10.2 14.15H3.9C1.5 14.15 0 12 0 8.5V2.6C0 .9 .9 0 2.6 0ZM4.9 2.3C4.5 2.3 4.2 2.5 3.9 2.8L2.5 4.1C2.2 4.4 2.2 4.7 2.4 5L3.3 6.6C3.5 7 3.8 7.1 4.2 7.1H10C10.4 7.1 10.7 7 10.9 6.6L11.8 5C12 4.7 12 4.4 11.7 4.1L10.3 2.8C10 2.5 9.7 2.3 9.3 2.3ZM7.3 5.8L9.1 3.5L9.6 3.9L8.5 6Z"/></svg><svg style="left:229.7px;top:1067.8px" width="12.8" height="14.4" viewBox="0 0 12.8 14.4"><path fill="#8c8c8c" stroke="#8c8c8c" stroke-width=".15" stroke-linejoin="round" d="M6.57 -0.46L6.36 1.85L6.53 3.9L7.34 5.52L8.62 6.21L9.56 5.1L9.1 3.56L8.48 2.36L8.82 1.64L10.84 3.56L12.3 6.47L12.47 9.03L11.44 11.6L9.3 13.39L7.34 14.16L8.36 12.62L9.1 10.74L8.53 9.2L7.59 8.0L6.57 9.89L5.71 11.94L4.0 13.22L1.95 12.71L0.32 10.74L0.15 8.52L1.35 5.95L1.6 5.27L2.15 7.32L3.57 9.29L4.51 7.32L3.62 4.75L3.91 2.7L4.94 0.82Z"/></svg><svg style="left:322.9px;top:1069.1px" width="13.4" height="13.2" viewBox="0 0 13.4 13.2"><rect x="0.0" y="7.2" width="3.8" height="2.2" fill="#8c8c8c"/><rect x="0.0" y="10.8" width="3.8" height="2.2" fill="#8c8c8c"/><rect x="4.6" y="0.0" width="3.8" height="2.2" fill="#8c8c8c"/><rect x="4.6" y="3.6" width="3.8" height="2.2" fill="#8c8c8c"/><rect x="4.6" y="7.2" width="3.8" height="2.2" fill="#8c8c8c"/><rect x="4.6" y="10.8" width="3.8" height="2.2" fill="#8c8c8c"/><rect x="9.2" y="3.6" width="3.8" height="2.2" fill="#8c8c8c"/><rect x="9.2" y="7.2" width="3.8" height="2.2" fill="#8c8c8c"/><rect x="9.2" y="10.8" width="3.8" height="2.2" fill="#8c8c8c"/></svg>
<span class="t" id="q2v0" style="left:156.3px;top:1022.75px;font-size:14px;color:#fff;">0</span>
<span class="t" id="q2v1" style="left:250.3px;top:1022.75px;font-size:14px;color:#fff;">0</span>
<span class="t" id="q2v2" style="left:344.3px;top:1022.75px;font-size:14px;color:#fff;">0</span>
<span class="t" id="q2v3" style="left:156.3px;top:1045.75px;font-size:14px;color:#fff;">655.06ms</span>
<span class="t" id="q2v4" style="left:250.3px;top:1045.75px;font-size:14px;color:#fff;">655.46ms</span>
<span class="t" id="q2v5" style="left:344.3px;top:1045.75px;font-size:14px;color:#fff;">0.00ns</span>
<span class="t" id="q2v6" style="left:156.3px;top:1068.75px;font-size:14px;color:#fff;">0B</span>
<span class="t" id="q2v7" style="left:250.3px;top:1068.75px;font-size:14px;color:#fff;">0B</span>
<span class="t" id="q2v8" style="left:344.3px;top:1068.75px;font-size:14px;color:#fff;">0</span>
<span class="t" id="q2c0" style="left:534.1px;top:955.58px;font-size:13px;color:#a6a6a8;font-family:'DejaVu Sans Mono','Liberation Mono',monospace;-webkit-text-stroke-width:.2px;">CREATE TABLE hive.default.demo1 (id int, name varchar)</span>
<div class="r" style="left:119px;top:1088px;width:1169px;height:35.5px;background:#1a1a1a;"></div>
<div class="r" style="left:529px;top:1123.5px;width:759px;height:138.5px;background:#262a34;"></div>
<div class="r" style="left:119px;top:1262px;width:1169px;height:1px;background:#3d3d3f;"></div>
<span class="t" id="q3id" style="left:135px;top:1099.35px;font-size:14px;color:#7adcf9;transform:scaleX(1.0002);transform-origin:0 0;">20231011_115141_00031_u6sf3</span>
<span class="t" id="q3tm" style="right:822px;top:1099.35px;font-size:14px;color:#c8c8c8;">7:51pm</span>
<div class="r" style="left:529px;top:1092px;width:759px;height:27.5px;background:#1c4027;"></div>
<div class="t" style="left:609.3px;width:600px;text-align:center;top:1099.84px;font-size:12px;color:#fff;-webkit-text-stroke-width:.5px;"><span id="q3st" style="display:inline-block;transform:scaleX(0.9283);transform-origin:50% 0;">FINISHED</span></div>
<span class="t" id="q3u" style="left:156px;top:1129.05px;font-size:14px;color:#fff;transform:scaleX(0.9879);transform-origin:0 0;">geehanlin</span>
<span class="t" id="q3s" style="left:156px;top:1151.85px;font-size:14px;color:#fff;transform:scaleX(1.0305);transform-origin:0 0;">trino-cli</span>
<span class="t" id="q3g" style="left:156px;top:1174.65px;font-size:14px;color:#fff;transform:scaleX(1.0167);transform-origin:0 0;">global</span>
<svg style="left:134.8px;top:1128px" width="14.4" height="14" viewBox="0 0 14.4 14"><path fill="#1edcff" d="M7.2 0C9.6 0 11.1 1.6 11.1 4C11.1 5.8 10.3 7.3 9.2 8.2V8.9L13.6 11.7C14.1 12 14.3 12.4 14.3 13V14H.1V13C.1 12.4 .3 12 .8 11.7L5.2 8.9V8.2C4.1 7.3 3.3 5.8 3.3 4C3.3 1.6 4.8 0 7.2 0Z"/></svg><svg style="left:134.8px;top:1152.1px" width="15.4" height="13" viewBox="0 0 15.4 13"><path fill="#1edcff" d="M0 4.9H4V2.9L8.3 6.4L4 9.9V7.9H0Z"/><path fill="none" stroke="#1edcff" stroke-width="2" stroke-linecap="round" d="M7.6 1H12a2.4 2.4 0 0 1 2.4 2.4V9.6a2.4 2.4 0 0 1-2.4 2.4H7.6"/></svg><svg style="left:133.9px;top:1173.9px" width="16.2" height="14.1" viewBox="0 0 16.2 14.1"><path fill="#1edcff" fill-rule="evenodd" d="M5.1 0H11.9L16.2 14.1H0ZM7.75 0L7.6 3.8H8.6L8.45 0ZM7.4 5.1L7.2 7.9H9L8.8 5.1ZM6.9 9.5L6.3 14.1H9.9L9.3 9.5Z"/></svg><svg style="left:135px;top:1198px" width="15" height="13" viewBox="0 0 15 13"><path fill="#8c8c8c" d="M.2 7.4L2.4 5.2L5.3 8.2L12.6 .5L14.7 2.7L5.3 12.5Z"/></svg><svg style="left:230.8px;top:1198px" width="11.2" height="13.2" viewBox="0 0 11.2 13.2"><path fill="#8c8c8c" d="M0 0L11.1 6.4L0 13.2Z"/></svg><svg style="left:325px;top:1199px" width="9" height="11" viewBox="0 0 9 11"><rect x="0" y="0" width="3.9" height="11" rx=".5" fill="#8c8c8c"/><rect x="5" y="0" width="3.8" height="11" rx=".5" fill="#8c8c8c"/></svg><svg style="left:137px;top:1219.9px" width="10.2" height="14.2" viewBox="0 0 10.2 14.2"><path fill="#8c8c8c" d="M0 .1H10V1.9H0ZM0 12.3H10V14.15H0Z"/><path fill="#8c8c8c" opacity=".8" fill-rule="evenodd" d="M.7 1.8H9.3C9.3 4.6 6.5 5.7 6.5 7.1C6.5 8.5 9.3 9.7 9.3 12.4H.7C.7 9.7 3.5 8.5 3.5 7.1C3.5 5.7 .7 4.6 .7 1.8ZM3 2.5C3 4.5 4.5 5 5 5.9C5.5 5 7 4.5 7 2.5ZM5 7.8C4.5 8.8 2.9 9.3 2.9 11.8H7.1C7.1 9.3 5.5 8.8 5 7.8Z"/></svg><svg style="left:229px;top:1219.9px" width="14" height="14.2" viewBox="0 0 14 14.2"><circle cx="7" cy="7.1" r="6.1" fill="none" stroke="#8c8c8c" stroke-width="1.8"/><path fill="#8c8c8c" d="M5.9 3.6H7.2V6.8H9.4V8.2H5.9Z"/></svg><svg style="left:322.9px;top:1219.9px" width="14.1" height="14.2" viewBox="0 0 14.1 14.2"><circle cx="7.05" cy="7.1" r="5.95" fill="none" stroke="#8c8c8c" stroke-width="2.2"/><path fill="#8c8c8c" d="M6.1 7.9L8.1 8L9.1 4.3Z"/><path fill="none" stroke="#8c8c8c" stroke-width="1" opacity=".75" d="M3.2 6.6H4.7M9.4 6.6H11M4.9 4L5.6 4.7"/><path fill="none" stroke="#8c8c8c" stroke-width=".8" opacity=".3" d="M4.8 9.9Q7.05 10.8 9.3 9.9"/></svg><svg style="left:134.9px;top:1242.85px" width="14.2" height="14.2" viewBox="0 0 14.2 14.2"><path fill="#8c8c8c" fill-rule="evenodd" d="M2.6 0H11.5C13.2 0 14.15 .9 14.15 2.6V8.5C14.15 12 12.6 14.15 10.2 14.15H3.9C1.5 14.15 0 12 0 8.5V2.6C0 .9 .9 0 2.6 0ZM4.9 2.3C4.5 2.3 4.2 2.5 3.9 2.8L2.5 4.1C2.2 4.4 2.2 4.7 2.4 5L3.3 6.6C3.5 7 3.8 7.1 4.2 7.1H10C10.4 7.1 10.7 7 10.9 6.6L11.8 5C12 4.7 12 4.4 11.7 4.1L10.3 2.8C10 2.5 9.7 2.3 9.3 2.3ZM7.3 5.8L9.1 3.5L9.6 3.9L8.5 6Z"/></svg><svg style="left:229.7px;top:1242.8px" width="12.8" height="14.4" viewBox="0 0 12.8 14.4"><path fill="#8c8c8c" stroke="#8c8c8c" stroke-width=".15" stroke-linejoin="round" d="M6.57 -0.46L6.36 1.85L6.53 3.9L7.34 5.52L8.62 6.21L9.56 5.1L9.1 3.56L8.48 2.36L8.82 1.64L10.84 3.56L12.3 6.47L12.47 9.03L11.44 11.6L9.3 13.39L7.34 14.16L8.36 12.62L9.1 10.74L8.53 9.2L7.59 8.0L6.57 9.89L5.71 11.94L4.0 13.22L1.95 12.71L0.32 10.74L0.15 8.52L1.35 5.95L1.6 5.27L2.15 7.32L3.57 9.29L4.51 7.32L3.62 4.75L3.91 2.7L4.94 0.82Z"/></svg><svg style="left:322.9px;top:1244.1px" width="13.4" height="13.2" viewBox="0 0 13.4 13.2"><rect x="0.0" y="7.2" width="3.8" height="2.2" fill="#8c8c8c"/><rect x="0.0" y="10.8" width="3.8" height="2.2" fill="#8c8c8c"/><rect x="4.6" y="0.0" width="3.8" height="2.2" fill="#8c8c8c"/><rect x="4.6" y="3.6" width="3.8" height="2.2" fill="#8c8c8c"/><rect x="4.6" y="7.2" width="3.8" height="2.2" fill="#8c8c8c"/><rect x="4.6" y="10.8" width="3.8" height="2.2" fill="#8c8c8c"/><rect x="9.2" y="3.6" width="3.8" height="2.2" fill="#8c8c8c"/><rect x="9.2" y="7.2" width="3.8" height="2.2" fill="#8c8c8c"/><rect x="9.2" y="10.8" width="3.8" height="2.2" fill="#8c8c8c"/></svg>
<span class="t" id="q3v0" style="left:156.3px;top:1197.75px;font-size:14px;color:#fff;">19</span>
<span class="t" id="q3v1" style="left:250.3px;top:1197.75px;font-size:14px;color:#fff;">0</span>
<span class="t" id="q3v2" style="left:344.3px;top:1197.75px;font-size:14px;color:#fff;">0</span>
<span class="t" id="q3v3" style="left:156.3px;top:1220.75px;font-size:14px;color:#fff;">102.14ms</span>
<span class="t" id="q3v4" style="left:250.3px;top:1220.75px;font-size:14px;color:#fff;">120.62ms</span>
<span class="t" id="q3v5" style="left:344.3px;top:1220.75px;font-size:14px;color:#fff;">10.00ms</span>
<span class="t" id="q3v6" style="left:156.3px;top:1243.75px;font-size:14px;color:#fff;">0B</span>
<span class="t" id="q3v7" style="left:250.3px;top:1243.75px;font-size:14px;color:#fff;">1.00KB</span>
<span class="t" id="q3v8" style="left:344.3px;top:1243.75px;font-size:14px;color:#fff;">23.2</span>
<span class="t" id="q3c0" style="left:534.1px;top:1130.58px;font-size:13px;color:#a6a6a8;font-family:'DejaVu Sans Mono','Liberation Mono',monospace;-webkit-text-stroke-width:.2px;">show tables from hive.default</span>
<div class="r" style="left:119px;top:1263px;width:1169px;height:10px;background:#1a1a1a;"></div>
<div class="r" style="left:529px;top:1267px;width:759px;height:6px;background:#1c4027;"></div>
<div class="r" style="left:1288px;top:518px;width:1px;height:750px;background:#3c3c3b;"></div>
<div class="r" style="left:119px;top:518px;width:1px;height:750px;background:#3c3c3b;"></div>
</div></div>
</body></html>
